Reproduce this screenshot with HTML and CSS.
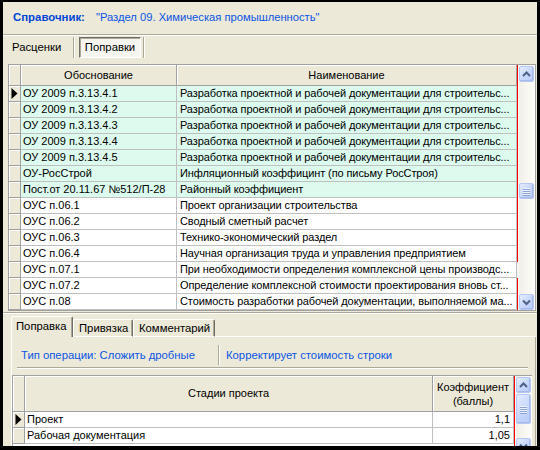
FILE: index.html
```html
<!DOCTYPE html>
<html lang="ru">
<head>
<meta charset="utf-8">
<title>Справочник</title>
<link rel="stylesheet" href="styles.css">
</head>
<body>
<div class="win">
  <div class="head">
    <span class="lbl">Справочник:</span>
    <span class="ttl">"Раздел 09. Химическая промышленность"</span>
  </div>
  <div class="tabbar">
    <span class="tb">Расценки</span>
    <span class="vsep"></span>
    <span class="tb pressed">Поправки</span>
    <span class="vsep"></span>
  </div>

  <div class="grid g1">
    <div class="gbody">
      <div class="hdr">
        <div class="ind"></div>
        <div class="hc">Обоснование</div>
        <div class="hc">Наименование</div>
      </div>
      <div class="row teal"><div class="ind"><svg class="ptr" width="11" height="15" viewBox="0 0 11 15"><polygon points="2.5,2 8.5,7.5 2.5,13" fill="#000"/></svg></div><div class="c">ОУ 2009 п.3.13.4.1</div><div class="c c2">Разработка проектной и рабочей документации для строительс...</div></div>
      <div class="row teal"><div class="ind"></div><div class="c">ОУ 2009 п.3.13.4.2</div><div class="c c2">Разработка проектной и рабочей документации для строительс...</div></div>
      <div class="row teal"><div class="ind"></div><div class="c">ОУ 2009 п.3.13.4.3</div><div class="c c2">Разработка проектной и рабочей документации для строительс...</div></div>
      <div class="row teal"><div class="ind"></div><div class="c">ОУ 2009 п.3.13.4.4</div><div class="c c2">Разработка проектной и рабочей документации для строительс...</div></div>
      <div class="row teal"><div class="ind"></div><div class="c">ОУ 2009 п.3.13.4.5</div><div class="c c2">Разработка проектной и рабочей документации для строительс...</div></div>
      <div class="row teal"><div class="ind"></div><div class="c">ОУ-РосСтрой</div><div class="c c2">Инфляционный коэффицинт (по письму РосСтроя)</div></div>
      <div class="row teal"><div class="ind"></div><div class="c">Пост.от 20.11.67 №512/П-28</div><div class="c c2">Районный коэффициент</div></div>
      <div class="row"><div class="ind"></div><div class="c">ОУС п.06.1</div><div class="c c2">Проект организации строительства</div></div>
      <div class="row"><div class="ind"></div><div class="c">ОУС п.06.2</div><div class="c c2">Сводный сметный расчет</div></div>
      <div class="row"><div class="ind"></div><div class="c">ОУС п.06.3</div><div class="c c2">Технико-экономический раздел</div></div>
      <div class="row"><div class="ind"></div><div class="c">ОУС п.06.4</div><div class="c c2">Научная организация труда и управления предприятием</div></div>
      <div class="row"><div class="ind"></div><div class="c">ОУС п.07.1</div><div class="c c2">При необходимости определения комплексной цены производс...</div></div>
      <div class="row"><div class="ind"></div><div class="c">ОУС п.07.2</div><div class="c c2">Определение комплексной стоимости проектирования вновь ст...</div></div>
      <div class="row"><div class="ind"></div><div class="c">ОУС п.08</div><div class="c c2">Стоимость разработки рабочей документации, выполняемой ма...</div></div>
    </div>
    <div class="vs v1">
      <div class="sbtn"><svg width="13" height="14" viewBox="0 0 13 14"><polyline points="3,9 6.5,5.5 10,9" fill="none" stroke="#4d6185" stroke-width="2"/></svg></div>
      <div class="track t1a"></div>
      <div class="thumb th1"><span class="grip"></span><span class="grip"></span><span class="grip"></span><span class="grip"></span></div>
      <div class="track"></div>
      <div class="sbtn"><svg width="13" height="14" viewBox="0 0 13 14"><polyline points="3,5.5 6.5,9 10,5.5" fill="none" stroke="#4d6185" stroke-width="2"/></svg></div>
    </div>
  </div>

  <div class="hsep"></div>

  <div class="ptabs">
    <span class="ptab active">Поправка</span>
    <span class="ptab">Привязка</span>
    <span class="ptab">Комментарий</span>
    <span class="pfill"></span>
  </div>

  <div class="page">
    <div class="info">
      <span class="op1">Тип операции: Сложить дробные</span>
      <span class="isep"></span>
      <span class="op2">Корректирует стоимость строки</span>
    </div>
    <div class="grid g2">
      <div class="gbody2">
        <div class="hdr2">
          <div class="ind"></div>
          <div class="hc">Стадии проекта</div>
          <div class="hc hc2">Коэффициент<br>(баллы)</div>
        </div>
        <div class="row2"><div class="ind"><svg class="ptr" width="11" height="15" viewBox="0 0 11 15"><polygon points="2.5,2 8.5,7.5 2.5,13" fill="#000"/></svg></div><div class="c">Проект</div><div class="c num">1,1</div></div>
        <div class="row2"><div class="ind"></div><div class="c">Рабочая документация</div><div class="c num">1,05</div></div>
      </div>
      <div class="vs v2">
        <div class="sbtn"><svg width="13" height="14" viewBox="0 0 13 14"><polyline points="3,9 6.5,5.5 10,9" fill="none" stroke="#4d6185" stroke-width="2"/></svg></div>
        <div class="thumb th2"><span class="grip"></span><span class="grip"></span><span class="grip"></span><span class="grip"></span></div>
        <div class="track"></div>
        <div class="sbtn"><svg width="13" height="14" viewBox="0 0 13 14"><polyline points="3,5.5 6.5,9 10,5.5" fill="none" stroke="#4d6185" stroke-width="2"/></svg></div>
      </div>
    </div>
  </div>
</div>
</body>
</html>
```

FILE: styles.css
```css
* { box-sizing: border-box; }

body {
  margin: 0;
  background: #000;
  font-family: "Liberation Sans", Arial, sans-serif;
  font-size: 11px;
  color: #000;
}

.win {
  margin: 2px 3px 0 3px;
  width: 534px;
  height: 444px;
  background: #ece9d8;
  overflow: hidden;
  display: flex;
  flex-direction: column;
}

/* header */
.head {
  height: 33px;
  flex: none;
  display: flex;
  align-items: center;
  padding: 0 0 3px 10px;
  border-bottom: 1px solid #aca899;
}
.lbl {
  font-weight: bold;
  font-size: 11.4px;
  color: #0046d5;
}
.ttl {
  font-size: 11.2px;
  color: #0b55e3;
  margin-left: 11px;
}

/* top tab bar */
.tabbar {
  height: 29px;
  flex: none;
  border-top: 1px solid #fff;
  display: flex;
  align-items: flex-start;
  padding: 1px 0 0 9px;
}
.tb {
  height: 21px;
  line-height: 21px;
  font-size: 11.3px;
  width: 59px;
}
.tb.pressed {
  width: 62px;
  margin-left: 4px;
  text-align: center;
  background: #f6f5f0;
  border: 1px solid;
  border-color: #716f64 #fff #fff #716f64;
  box-shadow: inset 1px 1px 0 #aca899;
  line-height: 19px;
}
.vsep {
  width: 2px;
  height: 21px;
  border-left: 1px solid #aca899;
  border-right: 1px solid #fff;
  margin-left: 2px;
}

/* grids */
.grid {
  display: flex;
  border: 1px solid #a0a0a0;
  background: #fff;
  flex: none;
}
.g1 {
  margin-left: 5px;
  width: 528px;
  height: 247px;
}
.gbody { width: 508px; flex: none; }

.hdr, .row {
  display: grid;
  grid-template-columns: 12px 156px 340px;
}
.hdr { height: 21px; }
.row { height: 16px; }
.row.teal .c { background: #dcfaee; }

.ind {
  background: #ece9d8;
  border-right: 1px solid #a0a0a0;
  border-bottom: 1px solid #a0a0a0;
  box-shadow: inset 1px 1px 0 #fff;
}
.ptr { display: block; }

.hc {
  background: #ece9d8;
  border-right: 1px solid #a0a0a0;
  border-bottom: 1px solid #a0a0a0;
  box-shadow: inset 1px 1px 0 #fff;
  text-align: center;
  line-height: 20px;
  font-size: 11px;
  white-space: nowrap;
  overflow: hidden;
}

.c {
  border-right: 1px solid #c0c0c0;
  border-bottom: 1px solid #c0c0c0;
  padding-left: 2px;
  line-height: 15px;
  white-space: nowrap;
  overflow: hidden;
  background: #fff;
}
.c2 { padding-left: 3px; letter-spacing: -0.1px; }

/* scrollbar (first pixel column carries the red edge line) */
.vs {
  width: 18px;
  flex: none;
  display: flex;
  flex-direction: column;
  padding-left: 2px;
}
.v1 {
  background:
    linear-gradient(#ff0000, #ff0000) 0 0 / 1px 197px no-repeat,
    linear-gradient(#ff0000, #ff0000) 0 213px / 1px 100% no-repeat,
    linear-gradient(to right, #f7f6f1 0, #f7f6f1 2px, #f1efe6 2px, #fdfdfa 100%);
}
.v2 {
  background:
    linear-gradient(#ff0000, #ff0000) 0 0 / 1px 100% no-repeat,
    linear-gradient(to right, #f7f6f1 0, #f7f6f1 2px, #f1efe6 2px, #fdfdfa 100%);
}
.sbtn, .thumb {
  flex: none;
  margin: 1px 1px 0 0;
  border: 1px solid #b5c7f2;
  border-radius: 2px;
  background: linear-gradient(135deg, #e4ecfe 0%, #c9d8fc 50%, #b6cbf7 100%);
  box-shadow: inset -1px -1px 0 #a6bbea;
}
.sbtn { height: 16px; }
.sbtn svg { display: block; margin: 0 auto; }
.track { flex: 1; }
.t1a { flex: 0 0 100px; }
.thumb {
  display: flex;
  flex-direction: column;
  align-items: center;
  justify-content: center;
  gap: 1px;
}
.th1 { height: 16px; }
.th2 { height: 30px; }
.grip {
  width: 7px;
  height: 1px;
  background: #eef3ff;
  box-shadow: 0 1px 0 #8ca2d6;
}

/* separator between grid and lower panel */
.hsep {
  flex: none;
  height: 2px;
  margin-top: 1px;
  border-top: 1px solid #aca899;
  border-bottom: 1px solid #fff;
}

/* lower tabs */
.ptabs {
  flex: none;
  display: flex;
  align-items: flex-end;
  height: 21px;
  margin-top: 2px;
  padding-left: 8px;
}
.ptab {
  height: 18px;
  line-height: 16px;
  font-size: 11.3px;
  padding: 0 0 0 5px;
  border-top: 1px solid #fff;
  border-left: 1px solid #fff;
  border-right: 1px solid #716f64;
  border-bottom: 1px solid #fff;
  border-radius: 2px 2px 0 0;
  box-shadow: inset -1px 0 0 #aca899;
  white-space: nowrap;
}
.ptab.active {
  height: 21px;
  line-height: 19px;
  border-bottom: none;
  width: 62px;
  padding-left: 4px;
}
.ptab:nth-child(2) { width: 60px; }
.ptab:nth-child(3) { width: 82px; }
.pfill {
  flex: 1;
  height: 1px;
  background: #fff;
  margin-right: 1px;
}

/* tab page */
.page {
  flex: 1;
  margin-left: 8px;
  margin-right: 1px;
  border-left: 1px solid #fff;
  border-right: 1px solid #aca899;
}
.info {
  height: 31px;
  margin: 0 7px 0 5px;
  padding-top: 6px;
  display: flex;
  align-items: center;
  border-bottom: 1px solid #aca899;
  box-shadow: 0 1px 0 #fff;
  color: #0b55e3;
  font-size: 11.3px;
}
.op1 { width: 201px; padding-left: 4px; }
.isep {
  width: 2px;
  height: 20px;
  border-left: 1px solid #aca899;
  border-right: 1px solid #fff;
}
.op2 { padding-left: 6px; }

.g2 {
  margin-top: 7px;
  width: 520px;
  height: 80px;
}
.gbody2 { width: 501px; flex: none; }
.hdr2, .row2 {
  display: grid;
  grid-template-columns: 12px 408px 81px;
}
.hdr2 { height: 36px; }
.hdr2 .hc { line-height: 35px; }
.hdr2 .hc2 { line-height: 14px; padding-top: 4px; }
.row2 { height: 16px; }
.num { text-align: right; padding-right: 3px; }
```
